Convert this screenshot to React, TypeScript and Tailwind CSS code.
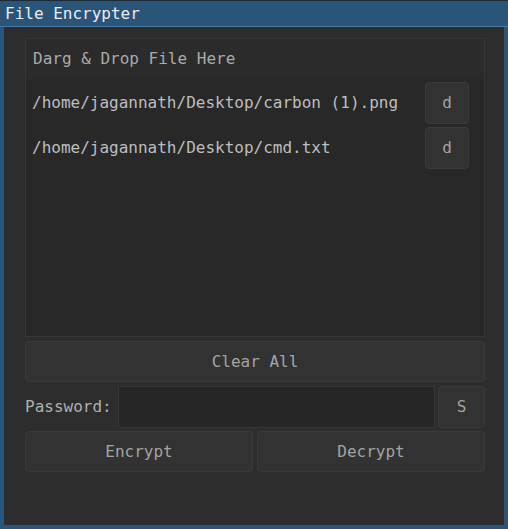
const mono = { fontFamily: '"DejaVu Sans Mono", "Liberation Mono", monospace' }

const files = ['/home/jagannath/Desktop/carbon (1).png', '/home/jagannath/Desktop/cmd.txt']

function Btn({ label, className }: { label: string; className: string }) {
  return (
    <button
      type="button"
      className={`flex items-center justify-center rounded-[4px] border border-[#3a3a3a] bg-[#323232] text-[16px] text-[#a4a4a4] ${className}`}
    >
      {label}
    </button>
  )
}

export default function App() {
  return (
    <div
      style={mono}
      className="w-[508px] h-[529px] flex flex-col bg-[#2a5579] border-t border-[#1e2a36]"
    >
      <div className="h-[26px] flex items-center pl-[5px] text-[16px] text-[#ececec] border-b border-[#4a7aa3] bg-[#2a5579]">
        File Encrypter
      </div>
      <div className="flex-1 mx-[4px] mb-[4px] bg-[#2d2d2d] pl-[21px] pr-[19px] pt-[11px] flex flex-col">
        <div className="h-[299px] border border-[#363636] bg-[#282828] flex flex-col">
          <div className="h-[40px] shrink-0 flex items-center pl-[7px] bg-[#2b2b2b] text-[16px] text-[#aaaaaa]">
            Darg &amp; Drop File Here
          </div>
          <div className="flex flex-col gap-[3px] pt-[3px]">
            {files.map((f) => (
              <div key={f} className="flex items-center justify-between pl-[6px] pr-[15px]">
                <span className="text-[16px] text-[#bebebe]">{f}</span>
                <Btn label="d" className="w-[44px] h-[42px]" />
              </div>
            ))}
          </div>
        </div>
        <Btn label="Clear All" className="mt-[4px] h-[41px] w-full" />
        <div className="mt-[4px] h-[42px] flex items-center">
          <span className="text-[16px] text-[#b0b0b0] w-[93px] shrink-0">Password:</span>
          <div className="h-[42px] w-[317px] border border-[#363636] bg-[#262626]" />
          <Btn label="S" className="ml-[3px] h-[42px] flex-1" />
        </div>
        <div className="mt-[3px] flex gap-[4px]">
          <Btn label="Encrypt" className="h-[41px] flex-1" />
          <Btn label="Decrypt" className="h-[41px] flex-1" />
        </div>
      </div>
    </div>
  )
}
